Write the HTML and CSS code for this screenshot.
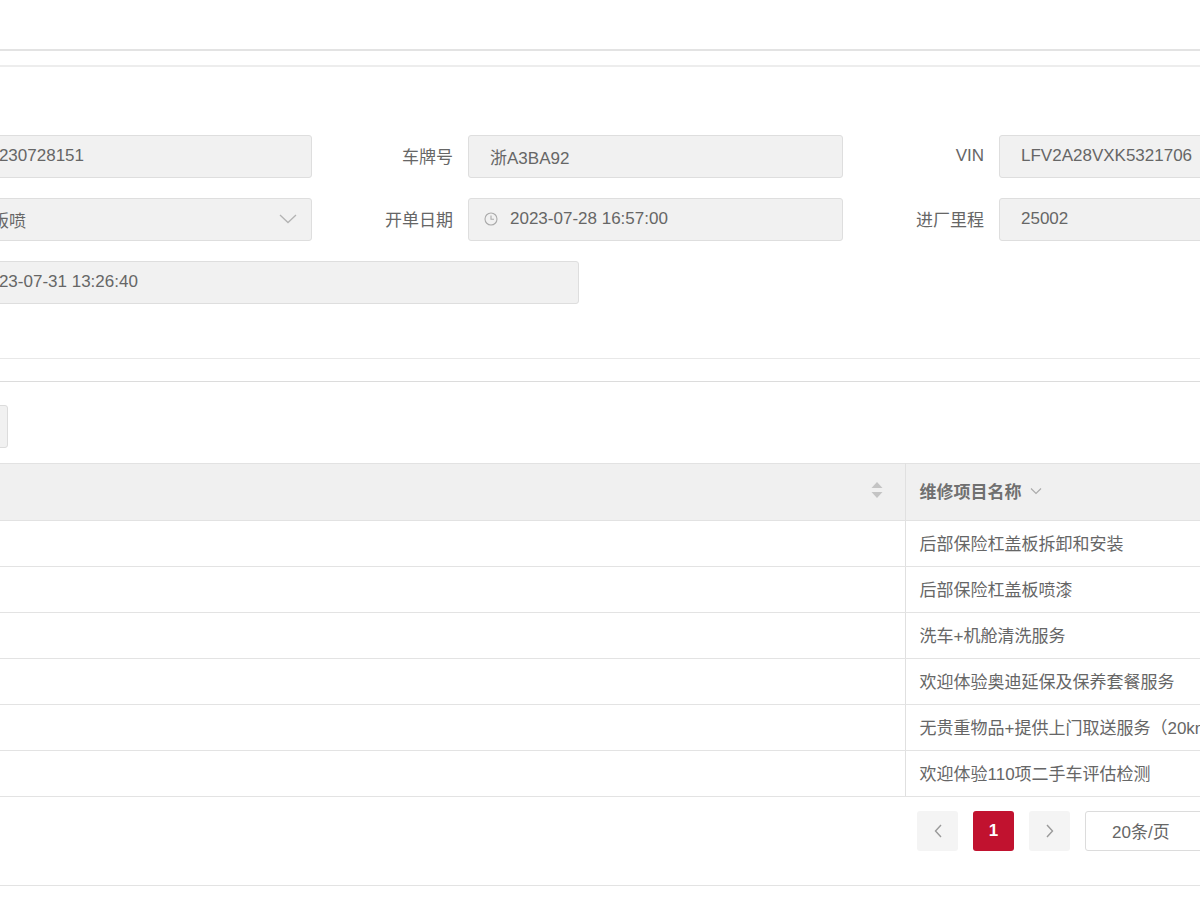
FILE: index.html
```html
<!DOCTYPE html>
<html lang="zh-CN">
<head>
<meta charset="utf-8">
<title>维修工单</title>
<link rel="stylesheet" href="styles.css">
</head>
<body>
<div class="viewport">
  <div class="page">
    <div class="topbar"></div>
    <div class="subbar"></div>

    <section class="form-section">
      <div class="form-grid">
        <div class="field first">
          <label class="label">工单号</label>
          <div class="input">20230728151</div>
        </div>
        <div class="field">
          <label class="label">车牌号</label>
          <div class="input">浙A3BA92</div>
        </div>
        <div class="field">
          <label class="label">VIN</label>
          <div class="input">LFV2A28VXK5321706</div>
        </div>

        <div class="field first">
          <label class="label">工单类型</label>
          <div class="input select">
            <span class="sel-text">钣喷</span>
            <svg class="chev" width="18" height="10" viewBox="0 0 18 10"><path d="M1 1 L9 8.5 L17 1" fill="none" stroke="#b3b3b3" stroke-width="1.3"/></svg>
          </div>
        </div>
        <div class="field">
          <label class="label">开单日期</label>
          <div class="input date">
            <svg class="clock" width="14" height="14" viewBox="0 0 14 14"><circle cx="7" cy="7" r="6" fill="none" stroke="#aaa" stroke-width="1.1"/><path d="M7 3.5 V7.3 H10" fill="none" stroke="#aaa" stroke-width="1.1"/></svg>
            <span>2023-07-28 16:57:00</span>
          </div>
        </div>
        <div class="field">
          <label class="label">进厂里程</label>
          <div class="input">25002</div>
        </div>

        <div class="field first wide">
          <label class="label">预计交车</label>
          <div class="input">2023-07-31 13:26:40</div>
        </div>
      </div>
    </section>

    <section class="list-section">
      <div class="toolbar">
        <button class="btn">导出</button>
      </div>

      <table class="table">
        <thead>
          <tr>
            <th class="col1">
              <span class="th-text">维修项目代码</span>
              <svg class="sort" width="12" height="18" viewBox="0 0 12 18"><path d="M6 1 L11.5 7 H0.5 Z" fill="#c4c4c4"/><path d="M6 17 L11.5 11 H0.5 Z" fill="#c4c4c4"/></svg>
            </th>
            <th class="col2">
              <span class="th-text">维修项目名称</span>
              <svg class="th-chev" width="12" height="8" viewBox="0 0 12 8"><path d="M1 1.5 L6 6.5 L11 1.5" fill="none" stroke="#aaa" stroke-width="1.1"/></svg>
            </th>
          </tr>
        </thead>
        <tbody>
          <tr><td class="col1"></td><td class="col2">后部保险杠盖板拆卸和安装</td></tr>
          <tr><td class="col1"></td><td class="col2">后部保险杠盖板喷漆</td></tr>
          <tr><td class="col1"></td><td class="col2">洗车+机舱清洗服务</td></tr>
          <tr><td class="col1"></td><td class="col2">欢迎体验奥迪延保及保养套餐服务</td></tr>
          <tr><td class="col1"></td><td class="col2">无贵重物品+提供上门取送服务（20km内）</td></tr>
          <tr><td class="col1"></td><td class="col2">欢迎体验110项二手车评估检测</td></tr>
        </tbody>
      </table>

      <div class="pager">
        <button class="pg-btn" aria-label="上一页">
          <svg width="8" height="14" viewBox="0 0 8 14"><path d="M7 1 L1.5 7 L7 13" fill="none" stroke="#9a9a9a" stroke-width="1.4"/></svg>
        </button>
        <button class="pg-btn active">1</button>
        <button class="pg-btn" aria-label="下一页">
          <svg width="8" height="14" viewBox="0 0 8 14"><path d="M1 1 L6.5 7 L1 13" fill="none" stroke="#9a9a9a" stroke-width="1.4"/></svg>
        </button>
        <div class="pg-size">20条/页</div>
      </div>
    </section>
  </div>
</div>
</body>
</html>
```

FILE: styles.css
```css
html, body {
  margin: 0;
  padding: 0;
  background: #ffffff;
}

body {
  font-family: "Liberation Sans", "Noto Sans CJK SC", sans-serif;
  font-size: 17px;
  color: #666666;
  overflow: hidden;
}

.viewport {
  width: 1200px;
  height: 900px;
  overflow: hidden;
}

.page {
  width: 1700px;
  margin-left: -219px;
}

.topbar {
  height: 49px;
  border-bottom: 2px solid #e3e3e3;
}

.subbar {
  height: 14px;
  border-bottom: 2px solid #ededed;
}

/* ---------- form ---------- */
.form-section {
  padding-top: 68px;
  padding-bottom: 54px;
  border-bottom: 1px solid #e8e8e8;
}

.form-grid {
  display: grid;
  grid-template-columns: 531px 531px 531px;
  row-gap: 20px;
}

.field {
  display: flex;
  align-items: center;
}

.field.wide {
  grid-column: span 2;
}

.label {
  width: 141px;
  margin-right: 15px;
  text-align: right;
  color: #666666;
  flex: none;
  padding-bottom: 2px;
}

.field.first .label {
  width: 162px;
}

.input {
  box-sizing: border-box;
  width: 375px;
  height: 43px;
  flex: none;
  display: flex;
  align-items: center;
  padding-left: 21px;
  padding-bottom: 1px;
  background: #f1f1f1;
  border: 1px solid #dedede;
  border-radius: 3px;
  color: #666666;
  white-space: nowrap;
}

.field.first .input {
  width: 354px;
}

.field.first.wide .input {
  width: 621px;
}

.select {
  justify-content: space-between;
  padding-right: 14px;
}

.sel-text {
  margin-left: 12px;
}

.date .clock {
  margin-left: -6px;
  margin-right: 12px;
  flex: none;
}

/* ---------- list ---------- */
.list-section {
  margin-top: 22px;
  border-top: 1px solid #dcdcdc;
  padding-top: 23px;
  border-bottom: 1px solid #e3e3e3;
  padding-bottom: 34px;
}

.toolbar {
  display: flex;
  margin-bottom: 15px;
}

.btn {
  box-sizing: border-box;
  height: 43px;
  width: 100px;
  margin-left: 127px;
  background: #f1f1f1;
  border: 1px solid #dcdcdc;
  border-radius: 3px;
  font: inherit;
  color: #666666;
}

.table {
  border-collapse: collapse;
  table-layout: fixed;
  width: 1524px;
}

.table .col1 {
  width: 1124px;
  border-right: 1px solid #e0e0e0;
}

.table th {
  box-sizing: border-box;
  height: 57px;
  background: #f0f0f0;
  border-top: 1px solid #e2e2e2;
  border-bottom: 1px solid #e2e2e2;
  text-align: left;
  font-weight: bold;
  color: #707070;
  padding: 0 14px 4px;
  white-space: nowrap;
}

.table th.col1 {
  position: relative;
}

.table th.col1 .th-text {
  visibility: hidden;
}

.sort {
  position: absolute;
  right: 22px;
  top: 50%;
  margin-top: -11px;
}

.th-chev {
  margin-left: 4px;
  vertical-align: middle;
  position: relative;
  top: -2px;
}

.table td {
  box-sizing: border-box;
  height: 46px;
  border-bottom: 1px solid #e3e3e3;
  padding: 0 14px 3px;
  color: #666666;
  white-space: nowrap;
}

/* ---------- pager ---------- */
.pager {
  display: flex;
  gap: 15px;
  padding-left: 1136px;
  margin-top: 14px;
}

.pg-btn {
  box-sizing: border-box;
  width: 41px;
  height: 40px;
  border: none;
  border-radius: 3px;
  background: #f4f4f4;
  display: flex;
  align-items: center;
  justify-content: center;
  padding: 0;
  font-family: "Liberation Sans", sans-serif;
  font-size: 17px;
  font-weight: bold;
  color: #666666;
}

.pg-btn.active {
  background: #c1122f;
  color: #ffffff;
}

.pg-size {
  box-sizing: border-box;
  width: 130px;
  height: 40px;
  border: 1px solid #dcdcdc;
  border-radius: 3px;
  background: #ffffff;
  display: flex;
  align-items: center;
  padding-left: 26px;
  padding-bottom: 2px;
  color: #666666;
}
```
